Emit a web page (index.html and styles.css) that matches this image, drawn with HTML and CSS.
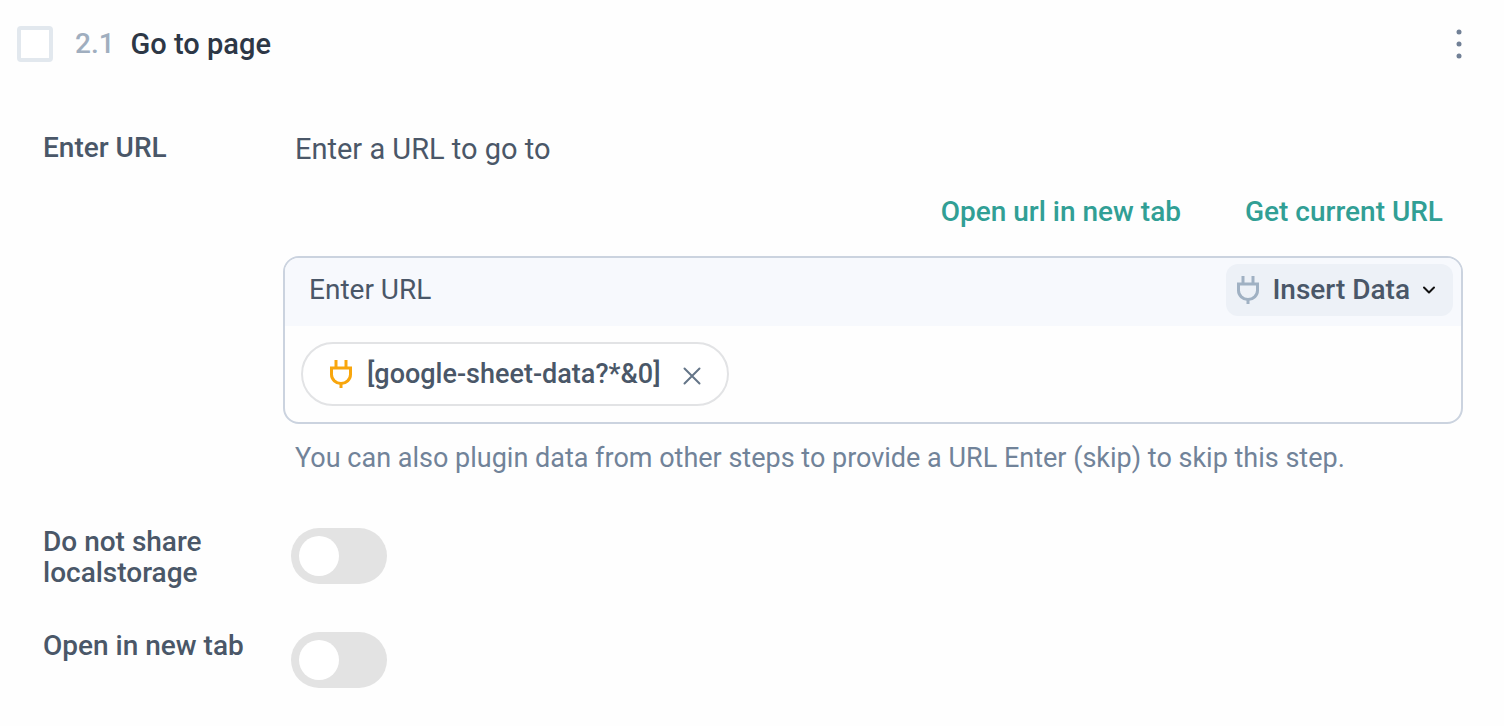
FILE: index.html
```html
<!DOCTYPE html>
<html lang="en">
<head>
<meta charset="utf-8">
<meta name="viewport" content="width=device-width, initial-scale=1">
<title>Go to page</title>
<link rel="stylesheet" href="styles.css">
</head>
<body>
<main class="step">
  <header class="step-header">
    <input class="step-check" type="checkbox" aria-label="Select step 2.1">
    <span class="step-number">2.1</span>
    <h1 class="step-title">Go to page</h1>
    <button class="menu-button" type="button" aria-label="Step options">
      <svg width="8" height="32" viewBox="0 0 8 32" fill="currentColor" aria-hidden="true"><circle cx="4" cy="4" r="2.500"/><circle cx="4" cy="16" r="2.500"/><circle cx="4" cy="28" r="2.500"/></svg>
    </button>
  </header>

  <div class="fields">
    <section class="field">
      <h2 class="field-label">Enter URL</h2>
      <div class="url-control">
        <p class="intro">Enter a URL to go to</p>
        <nav class="links">
          <a class="link" href="#new-tab-url">Open url in new tab</a>
          <a class="link" href="#current-url">Get current URL</a>
        </nav>
        <div class="url-box">
          <div class="url-head">
            <label class="url-label" for="url">Enter URL</label>
            <button class="insert" type="button">
              <svg class="plug" width="24" height="30" viewBox="0 0 24 30" fill="none" stroke="currentColor" stroke-width="3" aria-hidden="true"><path d="M7 1v8M17 1v8M1 9h22M2.500 9v6.500a9.500 9 0 0 0 19 0V9M12 24.500V29"/></svg>
              <span>Insert Data</span>
              <svg class="chevron" width="14" height="10" viewBox="0 0 14 10" fill="none" stroke="currentColor" stroke-width="2" stroke-linecap="round" stroke-linejoin="round" aria-hidden="true"><path d="M2 2.500l5 5 5-5"/></svg>
            </button>
          </div>
          <div class="url-body">
            <span class="chip">
              <svg class="plug plug-active" width="24" height="30" viewBox="0 0 24 30" fill="none" stroke="currentColor" stroke-width="3" aria-hidden="true"><path d="M7 1v8M17 1v8M1 9h22M2.500 9v6.500a9.500 9 0 0 0 19 0V9M12 24.500V29"/></svg>
              <span class="chip-text">[google-sheet-data?*&amp;0]</span>
              <button class="chip-remove" type="button" aria-label="Remove data">
                <svg width="18" height="18" viewBox="0 0 18 18" fill="none" stroke="currentColor" stroke-width="2" stroke-linecap="round" aria-hidden="true"><path d="M1.500 1.500l15 15M16.500 1.500l-15 15"/></svg>
              </button>
            </span>
            <input class="url-input" id="url" type="text">
          </div>
        </div>
        <p class="help">You can also plugin data from other steps to provide a URL Enter (skip) to skip this step.</p>
      </div>
    </section>

    <div class="field">
      <label class="field-label" for="share">Do not share localstorage</label>
      <input class="toggle" id="share" type="checkbox" role="switch">
    </div>
    <div class="field">
      <label class="field-label" for="new-tab">Open in new tab</label>
      <input class="toggle" id="new-tab" type="checkbox" role="switch">
    </div>
  </div>
</main>
</body>
</html>
```
FILE: styles.css
```css
* {
  box-sizing: border-box;
}

body {
  margin: 0;
  background: #fefefe;
  color: #4a5768;
  font: 400 28px/32px Roboto, "Liberation Sans", sans-serif;
}

h1, h2, p {
  margin: 0;
}

button, input {
  font: inherit;
  color: inherit;
  margin: 0;
}

button {
  padding: 0;
  border: 0;
  background: none;
  cursor: pointer;
}

svg {
  display: block;
  flex: none;
}

.step {
  padding: 26px 41px 32px 17px;
}

.step-header {
  display: flex;
  align-items: center;
}

.step-check {
  appearance: none;
  width: 36px;
  height: 36px;
  border: 4px solid #e2e8ee;
  border-radius: 4px;
  background: #fff;
}

.step-check:checked {
  background: #319f95;
}

.step-number {
  margin-left: 22px;
  color: #a0aebf;
  font-weight: 500;
}

.step-title {
  margin-left: 16px;
  color: #2d3746;
  font-size: 29px;
  font-weight: 500;
}

.menu-button {
  margin-left: auto;
  color: #718096;
}

.fields {
  display: grid;
  gap: 42px;
  padding: 70px 0 0 26px;
}

.field {
  display: grid;
  grid-template-columns: 240px minmax(0, 1fr);
  align-items: start;
}

.field-label {
  min-height: 62px;
  padding-right: 24px;
  font-size: 28px;
  font-weight: 500;
  line-height: 31px;
}

.intro {
  padding: 1px 12px 0;
  font-size: 29px;
}

.links {
  display: flex;
  justify-content: flex-end;
  gap: 64px;
  padding: 31px 20px 0;
}

.link {
  color: #319f95;
  font-weight: 500;
  text-decoration: none;
}

.url-box {
  margin-top: 28px;
  border: 2px solid #cbd3df;
  border-radius: 16px;
  overflow: hidden;
}

.url-head {
  display: flex;
  align-items: center;
  justify-content: space-between;
  padding: 6px 8px 10px 24px;
  background: #f7f9fd;
}

.insert {
  display: flex;
  align-items: center;
  gap: 12px;
  padding: 10px 17px 10px 10px;
  border-radius: 12px;
  background: #edf1f7;
  font-weight: 500;
}

.plug {
  color: #a0b1c3;
}

.plug-active {
  color: #f8a60d;
}

.chevron {
  color: #111;
}

.url-body {
  display: flex;
  align-items: center;
  padding: 16px;
}

.chip {
  display: flex;
  align-items: center;
  padding: 14px 26px;
  border: 2px solid #e2e3e5;
  border-radius: 32px;
  background: #fff;
}

.chip-text {
  margin: 0 22px 0 14px;
  font-size: 27px;
  font-weight: 500;
}

.chip-remove {
  padding-top: 3px;
  color: #647588;
}

.url-input {
  flex: 1;
  min-width: 0;
  padding: 0 12px;
  border: 0;
  outline: 0;
  background: transparent;
}

.help {
  padding: 18px 12px 10px;
  color: #718399;
  font-size: 27px;
}

.toggle {
  appearance: none;
  width: 96px;
  height: 56px;
  margin: 2px 0 0 8px;
  padding: 8px;
  border-radius: 28px;
  background: #e3e3e3;
  cursor: pointer;
}

.toggle::before {
  content: "";
  display: block;
  width: 40px;
  height: 40px;
  border-radius: 50%;
  background: #fff;
}

.toggle:checked {
  background: #319f95;
}

.toggle:checked::before {
  margin-left: auto;
}
```
